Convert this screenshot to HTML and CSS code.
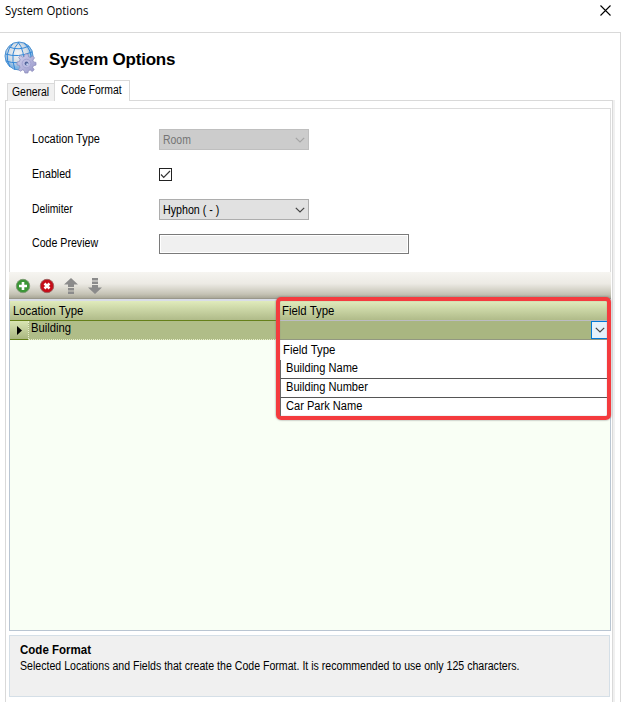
FILE: index.html
```html
<!DOCTYPE html>
<html lang="en">
<head>
<meta charset="utf-8">
<title>System Options</title>
<link rel="stylesheet" href="styles.css">
</head>
<body>
<header class="titlebar">
  <span class="caption">System Options</span>
  <svg class="close" width="11" height="11" viewBox="0 0 11 11"><path d="M.5 .5l10 10M10.5 .5l-10 10" stroke="#000" stroke-width="1.1"/></svg>
</header>
<main class="window">
  <div class="heading">
    <svg class="globe" width="34" height="34" viewBox="0 0 34 34">
      <defs>
        <radialGradient id="sea" cx=".45" cy=".4"><stop offset="0" stop-color="#f4f4f4"/><stop offset=".65" stop-color="#d5dde5"/><stop offset="1" stop-color="#83b5e2"/></radialGradient>
        <linearGradient id="steel" x2="1" y2="1"><stop offset="0" stop-color="#d4d4f0"/><stop offset="1" stop-color="#9696c8"/></linearGradient>
      </defs>
      <circle cx="15" cy="15" r="14" fill="url(#sea)" stroke="#4f93d2"/>
      <path d="M5 6Q15 10 25 5M1.500 13Q14 17 28 11M2 20Q13 24 27 19M15 1Q5 11 11 29M14 1Q21 9 20 28M9 2.500Q-1 13 6 26M20 2Q28 9 27 20" fill="none" stroke="#3488d8"/>
      <g transform="translate(22.500 22.500)">
        <path fill="url(#steel)" stroke="#8686b8" stroke-width=".7" d="M-1.600-9.500H1.600L2.100-6.700 4-6 6.200-7.600 8-5.600 6.400-3.400 7-1.600 9.500-1.100V1.600L7 2.200 6.200 4 7.700 6.200 5.700 8 3.700 6.500 1.900 7.200 1.400 9.500H-1.600L-2.200 7.100-4 6.400-6.200 7.800-8 5.800-6.500 3.800-7.200 1.900-9.500 1.400V-1.500L-7.100-2-6.400-4-7.800-6-5.900-7.900-3.800-6.400-2-7.100Z"/>
        <circle r="4.300" fill="#bcbde2" stroke="#a4a4d2"/>
        <circle r="1.900" fill="#53659b"/><circle cx=".7" cy=".7" r="1" fill="#c5d4f2"/>
      </g>
    </svg>
    <h1>System Options</h1>
  </div>
  <nav class="tabs">
    <div class="tab"><span class="t-general">General</span></div>
    <div class="tab active"><span class="t-code">Code Format</span></div>
  </nav>
  <section class="page">
    <div class="form">
      <div class="row"><label><span class="l-loc">Location Type</span></label>
        <div class="select disabled"><span class="t-room">Room</span><svg width="10" height="6" viewBox="0 0 10 6"><path d="M.8 .8L5 5 9.200 .8"/></svg></div></div>
      <div class="row"><label><span class="l-en">Enabled</span></label>
        <div class="check"><svg width="11" height="11" viewBox="0 0 11 11"><path d="M1 5.500l2.700 2.800L10 2"/></svg></div></div>
      <div class="row"><label><span class="l-del">Delimiter</span></label>
        <div class="select"><span class="t-hyphon">Hyphon ( - )</span><svg width="10" height="6" viewBox="0 0 10 6"><path d="M.8 .8L5 5 9.200 .8"/></svg></div></div>
      <div class="row"><label><span class="l-prev">Code Preview</span></label><div class="preview"></div></div>
    </div>
    <div class="toolbar">
      <svg width="16" height="16" viewBox="0 0 16 16"><circle cx="8" cy="8" r="6.700" fill="#3b9636" stroke="#7c9b72"/><path d="M8 4v8M4 8h8" stroke="#fff" stroke-width="2.600"/></svg>
      <svg width="16" height="16" viewBox="0 0 16 16"><circle cx="8" cy="8" r="6.700" fill="#c50d19" stroke="#9f6260"/><path d="M5.500 5.500l5 5M10.500 5.500l-5 5" stroke="#fff" stroke-width="2.500"/></svg>
      <svg width="16" height="16" viewBox="0 0 16 16"><path d="M8 0l7 6.500h-4V9H5V6.500H1zM5 10h6v2.500H5zM5 13.500h6V16H5z" fill="#8b8b8b"/></svg>
      <svg width="16" height="16" viewBox="0 0 16 16"><path d="M8 16l7-6.500h-4V7H5v2.500H1zM5 3.500h6V6H5zM5 0h6v2.500H5z" fill="#8b8b8b"/></svg>
    </div>
    <div class="grid">
      <div class="ghead"><div class="gcol"><span class="t-lochead">Location Type</span></div><div class="gcol second"><span class="t-field">Field Type</span></div></div>
      <div class="grow">
        <div class="marker"><svg width="5" height="9" viewBox="0 0 5 9"><path d="M0 0l5 4.500L0 9z"/></svg></div>
        <div class="cell"><span class="t-building">Building</span></div>
        <div class="cell second"><div class="drop"><svg width="10" height="6" viewBox="0 0 10 6"><path d="M.8 .8L5 5 9.200 .8"/></svg></div></div>
      </div>
      <div class="list">
        <div class="lhead"><span class="t-field">Field Type</span></div>
        <div class="item"><span class="t-item">Building Name</span></div>
        <div class="item"><span class="t-item">Building Number</span></div>
        <div class="item"><span class="t-item">Car Park Name</span></div>
      </div>
      <div class="highlight"></div>
    </div>
    <div class="help">
      <h2><span>Code Format</span></h2>
      <p><span>Selected Locations and Fields that create the Code Format. It is recommended to use only 125 characters.</span></p>
    </div>
  </section>
</main>
</body>
</html>
```
FILE: styles.css
```css
* { box-sizing: border-box; }
body { margin: 0; width: 621px; height: 702px; overflow: hidden; background: #fff; color: #000; font: 12px/14px "Liberation Sans", Arial, sans-serif; display: flex; flex-direction: column; }
svg { display: block; flex: none; }
span { display: inline-block; white-space: nowrap; transform-origin: 0 50%; }
h1, h2, p { margin: 0; }

.titlebar { height: 32px; flex: none; display: flex; justify-content: space-between; padding: 3px 10px 0 5px; }
.caption { font: 12px/15px "Open Sans", "Noto Sans", sans-serif; transform: scaleX(.95); }
.close { margin-top: 2px; }
.window { flex: 1; border-top: 1px solid #d9d9d9; border-right: 1px solid #d9d9d9; }
.heading { height: 47px; display: flex; padding: 8px 0 0 4px; }
h1 { font-size: 17px; line-height: 20px; margin: 9px 0 0 11px; letter-spacing: -.23px; white-space: nowrap; }

.tabs { height: 21px; display: flex; align-items: flex-end; padding-left: 7px; position: relative; z-index: 1; }
.tab { height: 18px; width: 47px; border: 1px solid #d9d9d9; border-right: 0; border-bottom: 0; background: #f0f0f0; padding: 1px 0 0 4px; }
.tab.active { width: 76px; height: 21px; background: #fff; border-right: 1px solid #d9d9d9; padding: 2px 0 0 6px; }
.page { width: 608px; height: 602px; margin: -1px 0 0 5px; border: 1px solid #d9d9d9; border-bottom: 0; box-shadow: 2px 0 #f0f0f0; padding: 7px 1px 0 3px; }

.form { width: 602px; height: 164px; border: 1px solid #dcdcdc; border-bottom: 0; padding: 13px 0 0 22px; }
.row { height: 35px; display: flex; align-items: center; }
.row:last-child { height: 33px; }
label { width: 127px; white-space: nowrap; margin-top: -2px; }
.select { width: 150px; height: 21px; border: 1px solid #adadad; background: #e1e1e1; display: flex; align-items: center; justify-content: space-between; padding: 1px 3px 0; }
.disabled { background: #ccc; border-color: #bfbfbf; color: #747474; }
.select path, .drop path { fill: none; stroke: #444; stroke-width: 1.2; }
.disabled path { stroke: #a5a5a5; }
.check { width: 13px; height: 13px; border: 1px solid #222; margin-top: -1px; }
.check path { fill: none; stroke: #333; stroke-width: 1.2; }
.preview { width: 250px; height: 20px; border: 1px solid #7a7a7a; background: #f0f0f0; box-shadow: inset 0 0 0 1px #fff; }

.toolbar { width: 602px; height: 27px; display: flex; align-items: center; gap: 8px; padding: 1px 0 0 6px; background: linear-gradient(#f6f5f1, #eceae4 45%, #c5c3b5 85%, #aaa898); border-bottom: 1px solid #99978a; }
.grid { width: 602px; height: 332px; border: 1px solid #b9c5d2; border-top: 2px solid #d9dde7; background: #f9fff5; position: relative; }
.ghead { height: 20px; display: flex; background: linear-gradient(#e0ebbc, #b0bb89); border-bottom: 1px solid #66801a; }
.gcol { width: 269px; padding: 3px 0 0 3px; }
.gcol.second { flex: 1; border-bottom: 1px solid #bcbcc4; margin-bottom: -1px; }
.grow { height: 19px; display: flex; background: #b0bd88; border-bottom: 1px dotted #e8efcb; }
.marker { width: 18px; height: 19px; background: linear-gradient(#d9e5b3, #aab780); border-bottom: 1px solid #66801a; padding: 5px 0 0 7px; }
.cell { width: 252px; padding: 0 0 0 2px; border-left: 1px dotted #e8efcb; }
.cell.second { flex: 1; height: 19px; border: 0; border-bottom: 1px solid #929781; background: #a9b681; display: flex; justify-content: flex-end; padding: 0 1px 0 0; }
.drop { width: 18px; height: 18px; border: 1px solid #0078d7; background: #e5f1fb; display: flex; align-items: center; justify-content: center; }
.list { position: absolute; left: 270px; top: 39px; width: 328px; height: 77px; background: #fff; }
.lhead { height: 20px; padding: 3px 0 0 3px; }
.item { height: 19px; border-left: 1px solid #666; border-bottom: 1px solid #555; padding: 1px 0 0 5px; }
.item:last-child { border-bottom: 0; }
.highlight { position: absolute; left: 266px; top: -4px; width: 335px; height: 123px; border: 4px solid #f43b3e; border-radius: 5px; box-shadow: 0 0 2px #777, inset 0 0 1px #777; }

.help { width: 601px; height: 62px; margin-top: 4px; border: 1px solid #d5dfe7; background: #f0f0f0; padding: 7px 0 0 10px; }
h2 { font-size: 12px; line-height: 15px; }
h2 span { transform: scaleX(.96); }
.help p { line-height: 16px; }
.help p span { transform: scaleX(.882); }

.l-loc { transform: scaleX(.91); }
.l-en { transform: scaleX(.886); }
.l-del { transform: scaleX(.86); }
.l-prev { transform: scaleX(.885); }
.t-general { transform: scaleX(.87); }
.t-code { transform: scaleX(.865); }
.t-room { transform: scaleX(.87); }
.t-hyphon { transform: scaleX(.89); }
.t-field { transform: scaleX(.95); }
.t-lochead { transform: scaleX(.945); }
.t-building { transform: scaleX(.94); }
.t-item { transform: scaleX(.923); }
```
